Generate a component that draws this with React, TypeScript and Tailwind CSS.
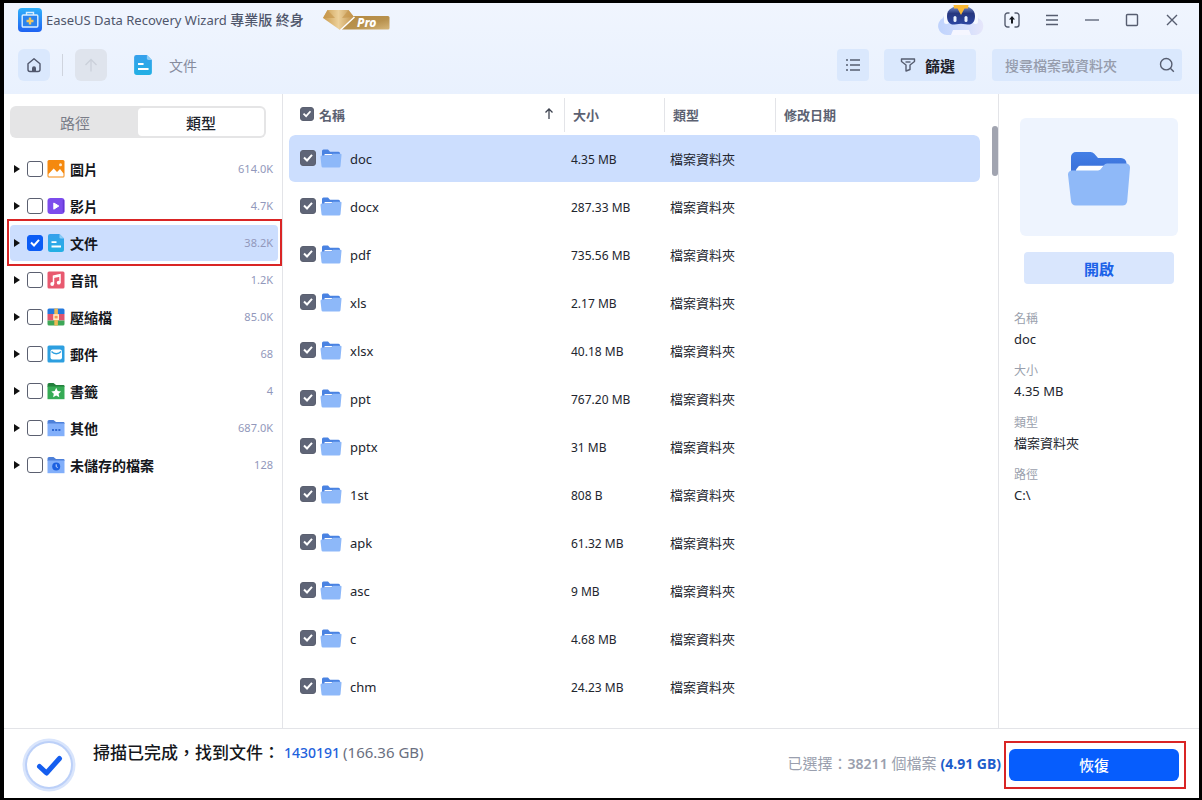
import { useState } from 'react';
import type { ReactNode } from 'react';

interface Category {
  id: string;
  label: string;
  count: string;
  icon: ReactNode;
}

interface FileRow {
  name: string;
  size: string;
}

const FILES: FileRow[] = [
  { name: 'doc', size: '4.35 MB' },
  { name: 'docx', size: '287.33 MB' },
  { name: 'pdf', size: '735.56 MB' },
  { name: 'xls', size: '2.17 MB' },
  { name: 'xlsx', size: '40.18 MB' },
  { name: 'ppt', size: '767.20 MB' },
  { name: 'pptx', size: '31 MB' },
  { name: '1st', size: '808 B' },
  { name: 'apk', size: '61.32 MB' },
  { name: 'asc', size: '9 MB' },
  { name: 'c', size: '4.68 MB' },
  { name: 'chm', size: '24.23 MB' },
];

const DETAILS = [
  { label: '名稱', value: 'doc' },
  { label: '大小', value: '4.35 MB' },
  { label: '類型', value: '檔案資料夾' },
  { label: '路徑', value: 'C:\\' },
];

/* Icons */

const AppLogo = () => (
  <svg width="24" height="24" viewBox="0 0 24 24" aria-hidden="true">
    <defs>
      <linearGradient id="logo" x1="0" y1="0" x2="0" y2="1">
        <stop offset="0" stopColor="#2fb0fa" />
        <stop offset="1" stopColor="#1f62f2" />
      </linearGradient>
    </defs>
    <rect width="24" height="24" rx="4" fill="url(#logo)" />
    <path d="M8.5 7V4.5h7V7" fill="none" stroke="#d9eeff" strokeWidth="1.4" />
    <rect x="4.2" y="7" width="15.6" height="12" rx="1" fill="#2a83ee" stroke="#d9eeff" strokeWidth="1.4" />
    <path d="M12 9.5v7M8.500 13h7" stroke="#f3c55b" strokeWidth="2.4" />
  </svg>
);

const ProBadge = () => (
  <svg width="67" height="22" viewBox="0 0 67 22" role="img" aria-label="Pro">
    <defs>
      <linearGradient id="proBar" x1="0" y1="0" x2="1" y2="1">
        <stop offset="0" stopColor="#b58a42" />
        <stop offset="0.6" stopColor="#b8924f" />
        <stop offset="1" stopColor="#d6b679" />
      </linearGradient>
      <linearGradient id="proGem" x1="0" y1="0" x2="1" y2="0">
        <stop offset="0" stopColor="#c99a4c" />
        <stop offset="0.5" stopColor="#ecd09a" />
        <stop offset="1" stopColor="#c0914a" />
      </linearGradient>
    </defs>
    <path d="M31 7h34a1.500 1.500 0 0 1 1.500 1.500v10.500a1.500 1.500 0 0 1-1.500 1.500H17z" fill="url(#proBar)" />
    <path d="M4.500 1h21l5.500 7-14 13L0 9z" fill="url(#proGem)" />
    <path d="M0 9 4.500 1 12 9zM19 9l6.500-8L31 8z" fill="#c4954b" opacity="0.65" />
    <path d="M31.500 8 17.500 21" stroke="#fff" strokeWidth="1.500" />
    <text x="34" y="18" fontFamily="Noto Sans, sans-serif" fontSize="12" fontWeight="800" fontStyle="italic" fill="#fff">Pro</text>
  </svg>
);

const Robot = () => (
  <svg width="46" height="30" viewBox="0 0 46 30" aria-hidden="true">
    <defs>
      <linearGradient id="cloud" x1="0" y1="0" x2="1" y2="0">
        <stop offset="0" stopColor="#bfd3fd" />
        <stop offset="0.6" stopColor="#d3defc" />
        <stop offset="1" stopColor="#e6e6fa" />
      </linearGradient>
      <linearGradient id="visor" x1="0" y1="0" x2="0" y2="1">
        <stop offset="0" stopColor="#7d94cf" />
        <stop offset="0.4" stopColor="#26377f" />
        <stop offset="1" stopColor="#2c46a2" />
      </linearGradient>
    </defs>
    <path d="M9 30a9 9 0 0 1-4-17A14 14 0 0 1 22 4a14 14 0 0 1 18 9 9 9 0 0 1-2 17z" fill="url(#cloud)" />
    <rect x="6" y="7" width="5" height="12" rx="2.500" fill="#f6f9ff" />
    <rect x="35" y="7" width="5" height="12" rx="2.500" fill="#f6f9ff" />
    <path d="M9 11C9 4 15 1 23 1s14 3 14 10c0 6-3 9-7.500 8.500L23 18.800l-6.500.7C12 20 9 17 9 11z" fill="url(#visor)" />
    <rect x="15.500" y="11" width="3" height="6" rx="1.500" fill="#e9f2ff" />
    <rect x="26.500" y="11" width="3" height="6" rx="1.500" fill="#e9f2ff" />
    <path d="M15.500 0h15l-.5 3.500h-3.500L23 10l-3.500-6.500H16z" fill="#f9b834" />
    <path d="M13 30 15 25h16l2 5z" fill="#f5f6ff" />
  </svg>
);

const DocIcon = ({ size }: { size: number }) => (
  <svg width={size} height={size} viewBox="0 0 18 18" aria-hidden="true">
    <defs>
      <linearGradient id="doc" x1="0" y1="0" x2="0" y2="1">
        <stop offset="0" stopColor="#36a0ec" />
        <stop offset="1" stopColor="#22b0e4" />
      </linearGradient>
    </defs>
    <path d="M3 0h9.500L17 4.500V15.500A2.500 2.500 0 0 1 14.500 18h-11A2.500 2.500 0 0 1 1 15.500V2a2 2 0 0 1 2-2z" fill="url(#doc)" />
    <path d="M12.500 0 17 4.500h-3.200a1.300 1.300 0 0 1-1.300-1.300z" fill="#8ccdf7" />
    <path d="M4.500 8.200h5M4.500 12.500h9.500" stroke="#fff" strokeWidth="1.800" />
  </svg>
);

const PictureIcon = () => (
  <svg width="18" height="18" viewBox="0 0 18 18" aria-hidden="true">
    <rect x="0.500" width="17" height="17.500" rx="1.500" fill="#f5890f" />
    <path d="M1.500 16.500V14l5.200-5.500 3.300 3.500 3-3 3.500 4.500v3z" fill="#fff" />
    <circle cx="13.500" cy="4.800" r="1.500" fill="#ffe9cd" />
  </svg>
);

const VideoIcon = () => (
  <svg width="18" height="18" viewBox="0 0 18 18" aria-hidden="true">
    <rect x="0.500" y="1" width="17" height="16" rx="3" fill="#7c4cec" />
    <path d="M16.500 3v12" stroke="#6536d4" strokeWidth="1.500" />
    <path d="M6.800 6v6.200L11.800 9z" fill="#fff" stroke="#fff" strokeLinejoin="round" />
  </svg>
);

const AudioIcon = () => (
  <svg width="18" height="18" viewBox="0 0 18 18" aria-hidden="true">
    <rect x="0.500" y="0.500" width="17" height="17" rx="1.500" fill="#e8596f" />
    <path d="M6.500 13V5l6.500-1.300v8" fill="none" stroke="#fff" strokeWidth="1.500" />
    <path d="M6.500 6.200 13 5" stroke="#fff" strokeWidth="1.500" />
    <circle cx="5.200" cy="13" r="1.900" fill="#fff" />
    <circle cx="11.700" cy="11.700" r="1.900" fill="#fff" />
  </svg>
);

const ArchiveIcon = () => (
  <svg width="18" height="18" viewBox="0 0 18 18" aria-hidden="true">
    <path d="M0.500 6V2A1.500 1.500 0 0 1 2 .5h14A1.500 1.500 0 0 1 17.500 2v4z" fill="#2379dd" />
    <path d="M0.500 6h17v6.500H.5z" fill="#e0566f" />
    <path d="M0.500 12.500h17V16a1.500 1.500 0 0 1-1.500 1.500H2A1.500 1.500 0 0 1 .5 16z" fill="#3ea757" />
    <path d="M7.300 0.500h3.600v17H7.300z" fill="#edb955" />
    <rect x="6.200" y="6.200" width="5.800" height="5.800" fill="#ffe9c8" />
    <rect x="7.600" y="7.800" width="3" height="2.600" fill="#f39a4d" />
  </svg>
);

const MailIcon = () => (
  <svg width="18" height="18" viewBox="0 0 18 18" aria-hidden="true">
    <rect x="0.500" y="0.500" width="17" height="17" rx="1.500" fill="#2d9fe0" />
    <rect x="3.500" y="4.500" width="11.500" height="10" rx="2" fill="#fff" />
    <path d="M4.500 6.500c2.500 3 7 3 9.500 0" fill="none" stroke="#2d9fe0" strokeWidth="1.300" />
  </svg>
);

const SmallFolder = ({ tab, body, children }: { tab: string; body: string; children: ReactNode }) => (
  <svg width="18" height="18" viewBox="0 0 18 18" aria-hidden="true">
    <path d="M0.500 5V2.500A1.500 1.500 0 0 1 2 1h4.500L9 3h7.500a1 1 0 0 1 1 1v1z" fill={tab} />
    <path d="M0.500 4.500h17v12.700H.5z" fill={body} />
    {children}
  </svg>
);

const FolderIcon = () => (
  <svg width="22" height="19" viewBox="0 0 22 19" aria-hidden="true">
    <path d="M2 9V2A1.500 1.500 0 0 1 3.500.5H8l2 2.200h8.500A1.500 1.500 0 0 1 20 4.200V9z" fill="#4a83e2" />
    <path d="M2 6.500h9.500l1.500-1.700h7.500A1 1 0 0 1 21.500 6l-1 11.200a1.500 1.500 0 0 1-1.500 1.300H3a1.500 1.500 0 0 1-1.500-1.300L.5 8A1.400 1.400 0 0 1 2 6.500z" fill="#8db8f9" />
    <path d="M4 6.300 5 5h7.500l-1.200 1.300z" fill="#fff" />
  </svg>
);

const BigFolder = () => (
  <svg width="62" height="54" viewBox="0 0 62 54" aria-hidden="true">
    <defs>
      <linearGradient id="folderBack" x1="0" y1="0" x2="0" y2="1">
        <stop offset="0" stopColor="#437fe6" />
        <stop offset="0.6" stopColor="#3d74dc" />
      </linearGradient>
    </defs>
    <path d="M3 24V5a5 5 0 0 1 5-5h14.500a5 5 0 0 1 3.800 1.800L30 6h23a5.500 5.500 0 0 1 5.500 5.500V24z" fill="url(#folderBack)" />
    <path d="M8 18.500v-1l2.500-3a2 2 0 0 1 1.500-.7h24L32 19H8z" fill="#fff" />
    <path d="M4 18.500h26a4 4 0 0 0 3-1.500l2.800-3.800A4 4 0 0 1 39 11.500h19a4 4 0 0 1 4 4.300l-2.800 33.400A5 5 0 0 1 54.300 53.500H8a5 5 0 0 1-5-4.400L0 22.800a4 4 0 0 1 4-4.300z" fill="#8fb9f8" />
  </svg>
);

const CATEGORIES: Category[] = [
  { id: 'pictures', label: '圖片', count: '614.0K', icon: <PictureIcon /> },
  { id: 'videos', label: '影片', count: '4.7K', icon: <VideoIcon /> },
  { id: 'documents', label: '文件', count: '38.2K', icon: <DocIcon size={18} /> },
  { id: 'audio', label: '音訊', count: '1.2K', icon: <AudioIcon /> },
  { id: 'archives', label: '壓縮檔', count: '85.0K', icon: <ArchiveIcon /> },
  { id: 'mail', label: '郵件', count: '68', icon: <MailIcon /> },
  {
    id: 'bookmarks',
    label: '書籤',
    count: '4',
    icon: (
      <SmallFolder tab="#23803d" body="#36ab55">
        <path d="m9.200 5.800 1.500 3.200 3.400.4-2.500 2.400.7 3.500-3.100-1.700-3.100 1.700.7-3.500-2.500-2.400 3.400-.4z" fill="#fff" />
      </SmallFolder>
    ),
  },
  {
    id: 'others',
    label: '其他',
    count: '687.0K',
    icon: (
      <SmallFolder tab="#4d80d9" body="#82affa">
        <path d="M5 10h2v2H5zM8.200 10h2v2h-2zM11.400 10h2v2h-2z" fill="#2f68d0" />
      </SmallFolder>
    ),
  },
  {
    id: 'unsaved',
    label: '未儲存的檔案',
    count: '128',
    icon: (
      <SmallFolder tab="#4d80d9" body="#82affa">
        <circle cx="9.200" cy="10.500" r="4" fill="#1c60e0" />
        <path d="M9.200 8.300v2.400l1.500.8" fill="none" stroke="#cfe0ff" />
      </SmallFolder>
    ),
  },
];

/* Checkbox with its tick drawn over the native input */
interface TickProps {
  id: string;
  checked: boolean;
  onChange: () => void;
  accent?: boolean;
  small?: boolean;
}

const Tick = ({ id, checked, onChange, accent, small }: TickProps) => (
  <span className="relative inline-flex shrink-0">
    <input
      id={id}
      type="checkbox"
      checked={checked}
      onChange={onChange}
      className={`appearance-none rounded-[3px] border border-[#5b6070] bg-white ${small ? 'size-[14px]' : 'size-4'} ${
        accent ? 'checked:border-[#0b5cf5] checked:bg-[#0b5cf5]' : 'checked:bg-[#5f6577]'
      }`}
    />
    {checked && (
      <svg viewBox="0 0 16 16" className="pointer-events-none absolute inset-0 size-full" aria-hidden="true">
        <path d="m4 7.500 3 3 5-5.600" fill="none" stroke="#fff" strokeWidth="2" />
      </svg>
    )}
  </span>
);

const TitleBar = () => (
  <div className="flex h-[34px] items-center justify-between pl-[14px] pr-[19px]">
    <div className="flex items-center">
      <AppLogo />
      <h1 className="ml-1 text-[13px] leading-5 text-[#4f566b]">
        EaseUS Data Recovery Wizard <span className="text-sm font-medium">專業版 終身</span>
      </h1>
      <span className="ml-[19px]">
        <ProBadge />
      </span>
    </div>
    <div className="flex items-center gap-6 text-[#565d70]">
      <button type="button" aria-label="AI" className="-mr-1">
        <Robot />
      </button>
      <button type="button" aria-label="升級">
        <svg width="16" height="16" viewBox="0 0 16 16" fill="none" stroke="currentColor" strokeWidth="1.400">
          <path d="M5.500 1H3.500A2.500 2.500 0 0 0 1 3.500v9A2.500 2.500 0 0 0 3.500 15h2M10.500 1h2A2.500 2.500 0 0 1 15 3.500v9a2.500 2.500 0 0 1-2.500 2.500h-2" />
          <path d="M8 11.500V6.500" stroke="#15181f" strokeWidth="2" />
          <path d="M8 4 11 7.500H5z" fill="#15181f" stroke="none" />
        </svg>
      </button>
      <button type="button" aria-label="選單">
        <svg width="16" height="16" viewBox="0 0 16 16" stroke="currentColor" strokeWidth="1.300">
          <path d="M2 3.500h12M2 8h12M2 12.500h12" />
        </svg>
      </button>
      <button type="button" aria-label="最小化">
        <svg width="16" height="16" viewBox="0 0 16 16" stroke="currentColor" strokeWidth="1.300">
          <path d="M1 8h14" />
        </svg>
      </button>
      <button type="button" aria-label="最大化">
        <svg width="16" height="16" viewBox="0 0 16 16" fill="none" stroke="currentColor" strokeWidth="1.400">
          <rect x="2.500" y="2.500" width="11" height="11" rx="1" />
        </svg>
      </button>
      <button type="button" aria-label="關閉">
        <svg width="16" height="16" viewBox="0 0 16 16" stroke="currentColor" strokeWidth="1.400">
          <path d="m3 3 10 10M13 3 3 13" />
        </svg>
      </button>
    </div>
  </div>
);

const Toolbar = () => (
  <div className="flex items-center justify-between pb-[13px] pl-[14px] pr-[17px] pt-3">
    <div className="flex items-center">
      <button type="button" aria-label="首頁" className="flex size-8 items-center justify-center rounded-md bg-[#dae8fd] text-[#50576c]">
        <svg width="16" height="16" viewBox="0 0 16 16" fill="none" stroke="currentColor" strokeWidth="1.400">
          <path d="M2 6.800 8 1.800l6 5v5.700a2 2 0 0 1-2 2H4a2 2 0 0 1-2-2z" strokeLinejoin="round" />
          <path d="M6 14.500v-3.200a2 2 0 0 1 4 0v3.200z" fill="currentColor" stroke="none" />
        </svg>
      </button>
      <span className="ml-3 h-[22px] w-px bg-[#cfd4de]" />
      <button type="button" aria-label="上一層" disabled className="ml-3 flex size-8 items-center justify-center rounded-md bg-[#dfe4ed] text-[#cbd0da]">
        <svg width="16" height="16" viewBox="0 0 16 16" fill="none" stroke="currentColor" strokeWidth="1.300">
          <path d="M8 14.500V2.500M2.500 8 8 2.500 13.500 8" />
        </svg>
      </button>
      <span className="ml-[26px]">
        <DocIcon size={20} />
      </span>
      <a href="#documents" className="ml-4 pt-0.5 text-sm text-[#868b9d]">文件</a>
    </div>
    <div className="flex items-center">
      <button type="button" aria-label="清單檢視" className="flex size-8 items-center justify-center rounded bg-[#dae8fd] text-[#565d70]">
        <svg width="16" height="16" viewBox="0 0 16 16" stroke="currentColor" strokeWidth="1.400">
          <path d="M1 3h2M1 8h2M1 13h2M5 3h10M5 8h10M5 13h10" />
        </svg>
      </button>
      <button type="button" className="ml-[15px] flex h-8 w-[92px] items-center gap-[9px] rounded bg-[#dae8fd] pl-4 text-[15px] font-bold text-[#1f222b]">
        <svg width="16" height="16" viewBox="0 0 16 16" fill="none" stroke="#565d70" strokeWidth="1.400" strokeLinejoin="round" aria-hidden="true">
          <path d="M1.500 2h13v2.500L10 8v4.500l-4 1.500V8L1.500 4.500z" />
          <path d="M5.500 5h5" />
        </svg>
        <span className="pt-0.5">篩選</span>
      </button>
      <div className="ml-4 flex h-8 w-[190px] items-center rounded bg-[#dae8fd] pl-[13px] pr-[7px]">
        <input
          type="search"
          aria-label="搜尋檔案或資料夾"
          placeholder="搜尋檔案或資料夾"
          className="min-w-0 flex-1 bg-transparent pt-0.5 text-sm font-medium outline-none placeholder:text-[#969cac]"
        />
        <svg width="16" height="16" viewBox="0 0 16 16" fill="none" stroke="#565d70" strokeWidth="1.400" aria-hidden="true">
          <circle cx="7.200" cy="7.200" r="5.700" />
          <path d="m11.300 11.300 3.500 3.500" />
        </svg>
      </div>
    </div>
  </div>
);

interface SidebarProps {
  checked: string[];
  onToggle: (id: string) => void;
}

const Sidebar = ({ checked, onToggle }: SidebarProps) => (
  <aside className="w-[279px] shrink-0 border-r border-[#e3e4e8] pl-[6px] pr-1 pt-3">
    <div role="tablist" className="mr-3 flex h-8 rounded-md bg-[#e5e5e6] p-0.5 text-[15px]">
      <button type="button" role="tab" aria-selected="false" className="flex-1 rounded pt-0.5 text-[#7a7d89]">
        路徑
      </button>
      <button type="button" role="tab" aria-selected="true" className="flex-1 rounded bg-white pt-0.5 font-medium text-[#22252e]">
        類型
      </button>
    </div>
    <ul className="mt-[13px] flex flex-col gap-px">
      {CATEGORIES.map((c) => {
        const selected = c.id === 'documents';
        return (
          <li
            key={c.id}
            className={`relative flex h-9 items-center rounded pr-[5px] ${selected ? 'bg-[#ccdefe]' : ''}`}
          >
            <button type="button" aria-label={`展開 ${c.label}`} className="ml-1 mr-[7px]">
              <svg width="6" height="8" viewBox="0 0 6 8" aria-hidden="true">
                <path d="M0 0 6 4 0 8z" fill="#111" />
              </svg>
            </button>
            <Tick id={`cat-${c.id}`} checked={checked.includes(c.id)} onChange={() => onToggle(c.id)} accent />
            <label htmlFor={`cat-${c.id}`} className="ml-1 flex flex-1 items-center gap-[5px] text-sm font-bold text-[#15171c]">
              {c.icon}
              <span className="pt-0.5">{c.label}</span>
            </label>
            <span className="text-[11px] text-[#9298bb]">{c.count}</span>
            {selected && (
              <span className="pointer-events-none absolute -bottom-[5px] -left-[3px] -right-1 -top-[6px] z-10 border-2 border-[#d92525]" />
            )}
          </li>
        );
      })}
    </ul>
  </aside>
);

const FileTable = () => {
  const [picked, setPicked] = useState<string[]>(FILES.map((f) => f.name));
  const all = picked.length === FILES.length;

  const toggle = (name: string) =>
    setPicked((prev) => (prev.includes(name) ? prev.filter((n) => n !== name) : [...prev, name]));

  return (
    <main className="flex min-w-0 flex-1 gap-3 pl-[6px]">
      <div className="flex-1">
        <table className="w-full table-fixed border-separate border-spacing-0 text-left text-xs text-[#22252e]">
          <colgroup>
            <col />
            <col className="w-[100px]" />
            <col className="w-[111px]" />
            <col className="w-[205px]" />
          </colgroup>
          <thead className="text-[13px] text-[#5c6172]">
            <tr className="h-[41px]">
              <th className="p-0 font-bold">
                <div className="flex items-center pl-[11px] pr-[10px]">
                  <Tick id="all" checked={all} onChange={() => setPicked(all ? [] : FILES.map((f) => f.name))} small />
                  <label htmlFor="all" className="ml-[5px] flex-1 pt-0.5">名稱</label>
                  <svg width="10" height="12" viewBox="0 0 10 12" fill="none" stroke="#3e4350" strokeWidth="1.300" aria-hidden="true">
                    <path d="M5 11V1M1.500 4.500 5 1l3.500 3.500" />
                  </svg>
                </div>
              </th>
              <th className="p-0 font-bold">
                <div className="flex h-[34px] items-center border-l border-[#e3e4e8] pl-2 pt-0.5">大小</div>
              </th>
              <th className="p-0 font-bold">
                <div className="flex h-[34px] items-center border-l border-[#e3e4e8] pl-2 pt-0.5">類型</div>
              </th>
              <th className="p-0 font-bold">
                <div className="flex h-[34px] items-center border-l border-[#e3e4e8] pl-2 pt-0.5">修改日期</div>
              </th>
            </tr>
          </thead>
          <tbody>
            {FILES.map((f, i) => (
              <tr
                key={f.name}
                className={`h-12 [&>td]:border-b [&>td]:border-transparent [&>td]:bg-clip-padding ${i === 0 ? '[&>td]:bg-[#ccdefe]' : ''}`}
              >
                <td className="rounded-l-md p-0">
                  <div className="flex items-center pl-[11px]">
                    <Tick id={`file-${f.name}`} checked={picked.includes(f.name)} onChange={() => toggle(f.name)} />
                    <label htmlFor={`file-${f.name}`} className="ml-1 flex items-center gap-2 text-[13px]">
                      <FolderIcon />
                      <span className="pt-0.5">{f.name}</span>
                    </label>
                  </div>
                </td>
                <td className="p-0 pl-[7px] pt-0.5">{f.size}</td>
                <td className="p-0 pl-[6px] pt-0.5 text-[13px]">檔案資料夾</td>
                <td className="rounded-r-md p-0" />
              </tr>
            ))}
          </tbody>
        </table>
      </div>
      <div className="mt-8 h-[50px] w-[6px] rounded-full bg-[#a1a4b0]" />
    </main>
  );
};

const DetailPanel = () => (
  <aside className="flex w-[201px] shrink-0 flex-col border-l border-[#e3e4e8] pl-[15px] pr-[21px] pt-6">
    <div className="ml-[6px] flex h-[118px] items-center justify-center rounded-md bg-[#eef4fe] pt-1">
      <BigFolder />
    </div>
    <button type="button" className="ml-[10px] mr-1 mt-4 h-8 rounded bg-[#d9e6fd] pt-0.5 text-[15px] font-bold text-[#1c62e8]">
      開啟
    </button>
    <dl className="mt-[25px] flex flex-col gap-3">
      {DETAILS.map((d) => (
        <div key={d.label}>
          <dt className="text-xs leading-5 text-[#9a9fad]">{d.label}</dt>
          <dd className="text-[13px] leading-5 text-[#22252e]">{d.value}</dd>
        </div>
      ))}
    </dl>
  </aside>
);

const Footer = () => (
  <footer className="flex h-[70px] items-center justify-between border-t border-[#e3e4e8] pl-[18px] pr-5">
    <div className="flex items-center gap-[17px]">
      <svg width="54" height="54" viewBox="0 0 54 54" className="mt-0.5" aria-hidden="true">
        <circle cx="27" cy="27" r="26.500" fill="#d9e5fc" />
        <circle cx="27" cy="27" r="24" fill="#bcd0f8" />
        <circle cx="27" cy="27" r="22" fill="#fff" />
        <path d="m17.500 28.500 7 6.500 13-14.500" fill="none" stroke="#155eef" strokeWidth="5" strokeLinecap="round" strokeLinejoin="round" />
      </svg>
      <p className="mb-[22px] flex items-center text-sm text-[#6a6f7f]">
        <span className="text-[17px] leading-6 font-medium text-[#15171c]">掃描已完成，找到文件：</span>
        <span className="ml-1 font-medium text-[#1d62dc]">1430191</span>
        <span className="ml-[3px] text-[15px]">(166.36 GB)</span>
      </p>
    </div>
    <div className="flex items-center gap-2">
      <p className="text-[15px] text-[#9a9fae]">
        已選擇：<span className="text-sm font-semibold">38211</span> 個檔案{' '}
        <span className="text-sm font-bold text-[#1d5dcb]">(4.91 GB)</span>
      </p>
      <div className="relative mt-0.5">
        <button type="button" className="h-8 w-[170px] rounded-md bg-[#065dfd] pt-0.5 text-[15px] font-medium text-white">
          恢復
        </button>
        <span className="pointer-events-none absolute -left-[5px] -right-[7px] -inset-y-2 border-2 border-[#d92525]" />
      </div>
    </div>
  </footer>
);

export default function App() {
  const [checked, setChecked] = useState<string[]>(['documents']);

  const toggle = (id: string) =>
    setChecked((prev) => (prev.includes(id) ? prev.filter((c) => c !== id) : [...prev, id]));

  return (
    <div className="flex min-h-screen flex-col border-b-2 border-l-4 border-r-[3px] border-t-[3px] border-black bg-white font-['Noto_Sans','Noto_Sans_CJK_TC',sans-serif]">
      <header className="bg-linear-to-b from-[#f0f5fe] to-[#e9f1fe]">
        <TitleBar />
        <Toolbar />
      </header>
      <div className="flex flex-1">
        <Sidebar checked={checked} onToggle={toggle} />
        <FileTable />
        <DetailPanel />
      </div>
      <Footer />
    </div>
  );
}
